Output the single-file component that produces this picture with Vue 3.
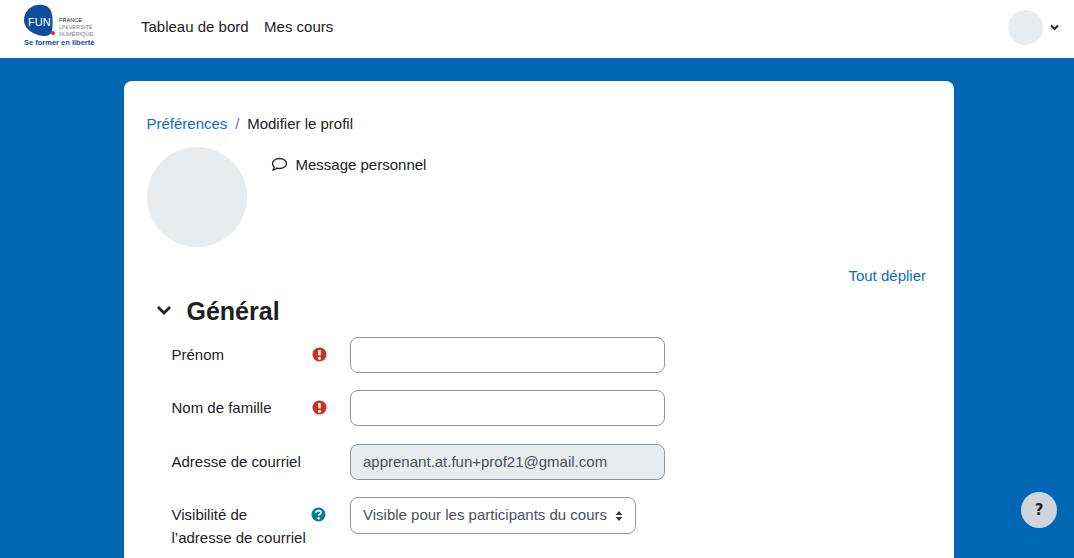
<template>
  <div class="page">
    <header class="navbar">
      <a class="brand">
        <svg width="72" height="48" viewBox="0 0 72 48">
          <path d="M14 2C20 1 26 3 28 8c2 5 2 14 1 20-1 4-5 5.500-9 5C12 32 1 27 1 17 1 9 7 3 14 2z" fill="#0d4f9e"/>
          <circle cx="30" cy="30" r="2" fill="#e8202a"/>
          <text x="5" y="23" class="logo-fun">FUN</text>
          <text x="36" y="19" class="logo-small dark">FRANCE</text>
          <text x="36" y="26" class="logo-small">UNIVERSITÉ</text>
          <text x="36" y="33" class="logo-small">NUMÉRIQUE</text>
          <text x="1" y="41.500" class="logo-tag">Se former en liberté</text>
        </svg>
      </a>
      <nav class="nav-links">
        <a v-for="link in navLinks" :key="link">{{ link }}</a>
      </nav>
      <div class="user-menu">
        <span class="nav-avatar"></span>
        <svg class="caret" width="9" height="7" viewBox="0 0 9 7"><path d="M1 1.500l3.500 3.500L8 1.500" fill="none" stroke="#1d2125" stroke-width="2"/></svg>
      </div>
    </header>

    <main class="card">
      <div class="breadcrumb">
        <a class="link">Préférences</a>
        <span class="sep">/</span>
        <span>Modifier le profil</span>
      </div>

      <div class="profile-head">
        <div class="avatar"></div>
        <a class="message">
          <svg width="17" height="15" viewBox="0 0 17 15"><path d="M8.500 1.500c4 0 7 2.200 7 5s-3 5-7 5c-1 0-1.900-.1-2.700-.4C4.800 12.200 3.300 13 1.800 13.200c.8-.9 1.300-1.900 1.500-3C2.100 9.300 1.500 8 1.500 6.500c0-2.800 3-5 7-5z" fill="none" stroke="#1d2125" stroke-width="1.300" stroke-linejoin="round"/></svg>
          <span>Message personnel</span>
        </a>
      </div>

      <div class="expand-row"><a class="link">Tout déplier</a></div>

      <div class="section-head">
        <svg width="16" height="11" viewBox="0 0 16 11"><path d="M2 2l6 6 6-6" fill="none" stroke="#1d2125" stroke-width="2.800"/></svg>
        <h3>Général</h3>
      </div>

      <form class="form" @submit.prevent>
        <div v-for="field in fields" :key="field.label" class="row">
          <label>{{ field.label }}</label>
          <span class="status">
            <svg v-if="field.icon === 'required'" width="15" height="15" viewBox="0 0 15 15">
              <circle cx="7.500" cy="7.500" r="7" fill="#ca3120"/>
              <path d="M7.500 3v5.300" stroke="#fff" stroke-width="2.600"/>
              <circle cx="7.500" cy="11.200" r="1.500" fill="#fff"/>
            </svg>
            <svg v-else-if="field.icon === 'help'" class="help-icon" width="15" height="15" viewBox="0 0 15 15">
              <circle cx="7.500" cy="7.500" r="7" fill="#008196"/>
              <path d="M5 5.800c.1-1.400 1.200-2.200 2.600-2.200 1.400 0 2.500.8 2.500 2 0 1.800-2.400 1.600-2.400 3.200" fill="none" stroke="#fff" stroke-width="1.800"/>
              <circle cx="7.600" cy="11.300" r="1.200" fill="#fff"/>
            </svg>
          </span>
          <div v-if="field.type === 'select'" class="select">
            <span>{{ field.value }}</span>
            <svg width="8" height="12" viewBox="0 0 8 12"><path d="M4 1L7.500 5H.5zM4 11L.5 7h7z" fill="#343a40"/></svg>
          </div>
          <div v-else class="input" :class="{ disabled: field.type === 'disabled' }">{{ field.value }}</div>
        </div>
      </form>
    </main>

    <button class="help-btn">?</button>
  </div>
</template>

<script setup>
const navLinks = ['Tableau de bord', 'Mes cours']

const fields = [
  { label: 'Prénom', icon: 'required', type: 'text', value: '' },
  { label: 'Nom de famille', icon: 'required', type: 'text', value: '' },
  { label: 'Adresse de courriel', icon: '', type: 'disabled', value: 'apprenant.at.fun+prof21@gmail.com' },
  { label: 'Visibilité de l’adresse de courriel', icon: 'help', type: 'select', value: 'Visible pour les participants du cours' }
]
</script>

<style>
html, body {
  margin: 0;
  height: 558px;
  overflow: hidden;
}
</style>

<style scoped>
.page {
  height: 558px;
  overflow: hidden;
  background: #0067b4;
  font-family: "Liberation Sans", Arial, sans-serif;
  font-size: 15px;
  line-height: 22.500px;
  color: #1d2125;
}
.navbar {
  height: 58px;
  box-sizing: border-box;
  background: #fff;
  display: flex;
  align-items: center;
  padding: 0 15px 4px 23px;
}
.brand {
  display: flex;
  width: 72px;
  height: 48px;
}
.logo-fun {
  font-family: "Liberation Sans", sans-serif;
  font-size: 11px;
  fill: #fff;
}
.logo-small {
  font-family: "Liberation Sans", sans-serif;
  font-size: 5.600px;
  fill: #7a7e83;
}
.logo-small.dark {
  fill: #222;
}
.logo-tag {
  font-family: "Liberation Sans", sans-serif;
  font-size: 7.500px;
  font-weight: 700;
  fill: #0d4f9e;
}
.nav-links {
  display: flex;
  gap: 15.500px;
  margin-left: 46px;
}
.user-menu {
  margin-left: auto;
  display: flex;
  align-items: center;
  gap: 7px;
}
.nav-avatar {
  width: 35px;
  height: 35px;
  border-radius: 50%;
  background: #e9ecef;
}
.card {
  width: 830px;
  height: 520px;
  box-sizing: border-box;
  margin: 23px 0 0 124px;
  padding: 32px 28px 0 22.500px;
  background: #fff;
  border-radius: 8px;
}
.breadcrumb {
  display: flex;
  gap: 7.800px;
}
.link {
  color: #0f6cbf;
}
.sep {
  color: #6a737b;
}
.profile-head {
  display: flex;
  gap: 24px;
  margin-top: 11px;
}
.avatar {
  width: 100px;
  height: 100px;
  border-radius: 50%;
  background: #e9ecef;
}
.message {
  display: flex;
  align-items: center;
  gap: 8px;
  height: 22.500px;
  margin-top: 7px;
}
.expand-row {
  text-align: right;
  margin-top: 18px;
}
.section-head {
  display: flex;
  align-items: center;
  gap: 15px;
  margin: 8.500px 0 0 9px;
}
.section-head h3 {
  margin: 0;
  font-size: 25px;
  line-height: 30px;
  font-weight: 700;
}
.form {
  margin-top: 11px;
  padding-left: 25px;
}
.row {
  display: grid;
  grid-template-columns: 140px 38px auto;
  justify-content: start;
  margin-bottom: 17.500px;
}
.row label {
  padding-top: 7px;
  padding-right: 4px;
}
.status {
  display: flex;
  padding-top: 10px;
}
.help-icon {
  margin-left: -1px;
}
.input {
  width: 315px;
  height: 36px;
  box-sizing: border-box;
  border: 1px solid #8f959e;
  border-radius: 8px;
  padding: 6px 12.500px;
  color: #495057;
}
.input.disabled {
  background: #e9ecef;
}
.select {
  height: 37px;
  box-sizing: border-box;
  border: 1px solid #8f959e;
  border-radius: 8px;
  padding: 6px 12px 6px 12.500px;
  display: flex;
  align-items: center;
  gap: 8px;
  color: #495057;
}
.help-btn {
  position: fixed;
  left: 1021px;
  top: 492px;
  width: 36px;
  height: 36px;
  border: 0;
  border-radius: 50%;
  background: #ced4da;
  color: #1d2125;
  font-family: "DejaVu Sans", sans-serif;
  font-size: 15px;
  font-weight: 700;
  padding: 0;
}
</style>
